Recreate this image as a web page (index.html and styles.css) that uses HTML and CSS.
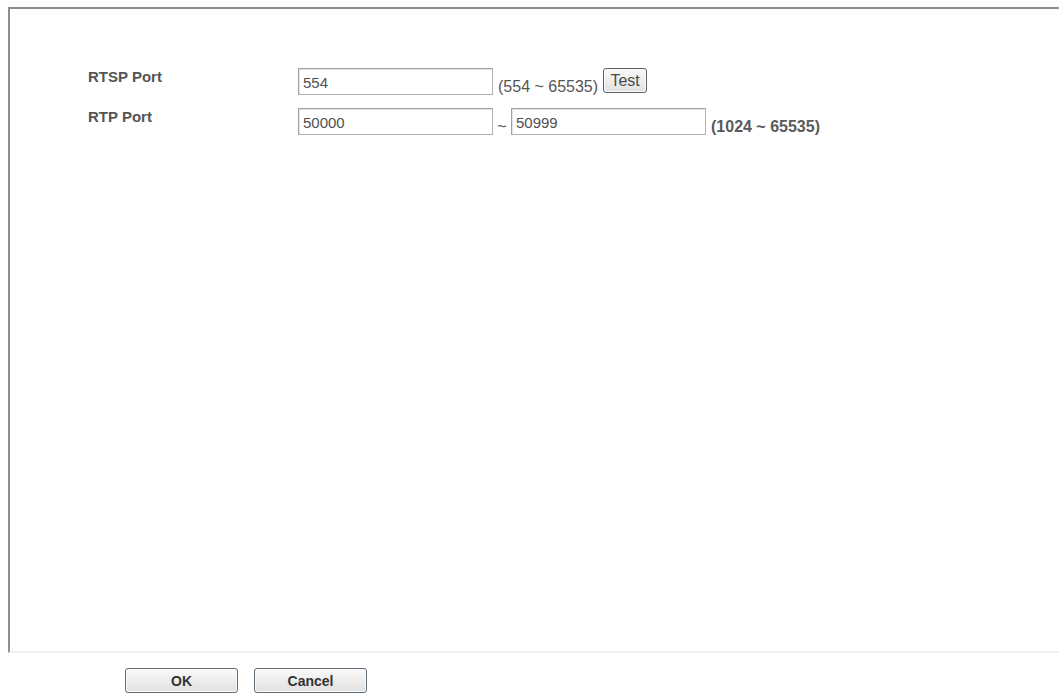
FILE: index.html
```html
<!DOCTYPE html>
<html lang="en">
<head>
<meta charset="utf-8">
<title>RTSP Settings</title>
<link rel="stylesheet" href="styles.css">
</head>
<body>
<div class="frame">
  <div class="form">
    <div class="label">RTSP Port</div>
    <div class="field">
      <input class="port" type="text" value="554">
      <span class="hint">(554 ~ 65535)</span>
      <button class="test" type="button">Test</button>
    </div>
    <div class="label">RTP Port</div>
    <div class="field">
      <input class="port" type="text" value="50000">
      <span class="tilde">~</span>
      <input class="port" type="text" value="50999">
      <span class="hint strong">(1024 ~ 65535)</span>
    </div>
  </div>
</div>
<div class="actions">
  <button class="btn" type="button">OK</button>
  <button class="btn" type="button">Cancel</button>
</div>
</body>
</html>
```

FILE: styles.css
```css
html, body {
  margin: 0;
  padding: 0;
  background: #ffffff;
  overflow: hidden;
}

body {
  font-family: "Liberation Sans", Arial, sans-serif;
  color: #505050;
}

.frame {
  box-sizing: border-box;
  height: 646px;
  margin: 7px 0 0 8px;
  border-top: 2px solid #8e8e8e;
  border-left: 2px solid #8e8e8e;
  border-bottom: 2px solid #efefef;
  padding: 59px 0 0 78px;
}

.form {
  display: grid;
  grid-template-columns: 210px auto;
  row-gap: 13px;
  align-items: start;
}

.label {
  font-size: 15px;
  font-weight: bold;
  line-height: 17px;
  color: #555555;
}

.field {
  display: flex;
  align-items: flex-end;
  height: 27px;
}

.port {
  box-sizing: border-box;
  width: 195px;
  height: 27px;
  margin: 0;
  padding: 2px 4px 0 4px;
  border: 1px solid #b0b0b0;
  border-top-color: #a0a0a0;
  border-left-color: #a0a0a0;
  box-shadow: inset 1px 1px 1px #e4e4e4;
  font-family: "Liberation Sans", Arial, sans-serif;
  font-size: 15px;
  color: #505050;
  background: #ffffff;
  outline: none;
}

.hint {
  font-size: 16px;
  line-height: 16px;
  margin-left: 5px;
  color: #555555;
}

.hint.strong {
  font-weight: bold;
  color: #5a5a5a;
}

.tilde {
  font-size: 16px;
  line-height: 16px;
  width: 18px;
  text-align: center;
  color: #555555;
}

.test {
  align-self: flex-start;
  box-sizing: border-box;
  width: 44px;
  height: 25px;
  margin: 0 0 0 5px;
  padding: 0;
  border: 1px solid #56626e;
  border-radius: 3px;
  box-shadow: inset 0 0 0 1px #fbfbfb;
  background: linear-gradient(#f9f9f9, #e2e2e2);
  font-family: "Liberation Sans", Arial, sans-serif;
  font-size: 16px;
  color: #4a4a4a;
}

.actions {
  display: flex;
  gap: 16px;
  padding: 15px 0 0 125px;
}

.btn {
  box-sizing: border-box;
  width: 113px;
  height: 25px;
  margin: 0;
  padding: 0;
  border: 1px solid #5f6b77;
  border-radius: 3px;
  box-shadow: inset 0 0 0 1px #fbfbfb;
  background: linear-gradient(#fafafa, #e0e0e0);
  font-family: "Liberation Sans", Arial, sans-serif;
  font-size: 14px;
  font-weight: bold;
  color: #333333;
}
```
